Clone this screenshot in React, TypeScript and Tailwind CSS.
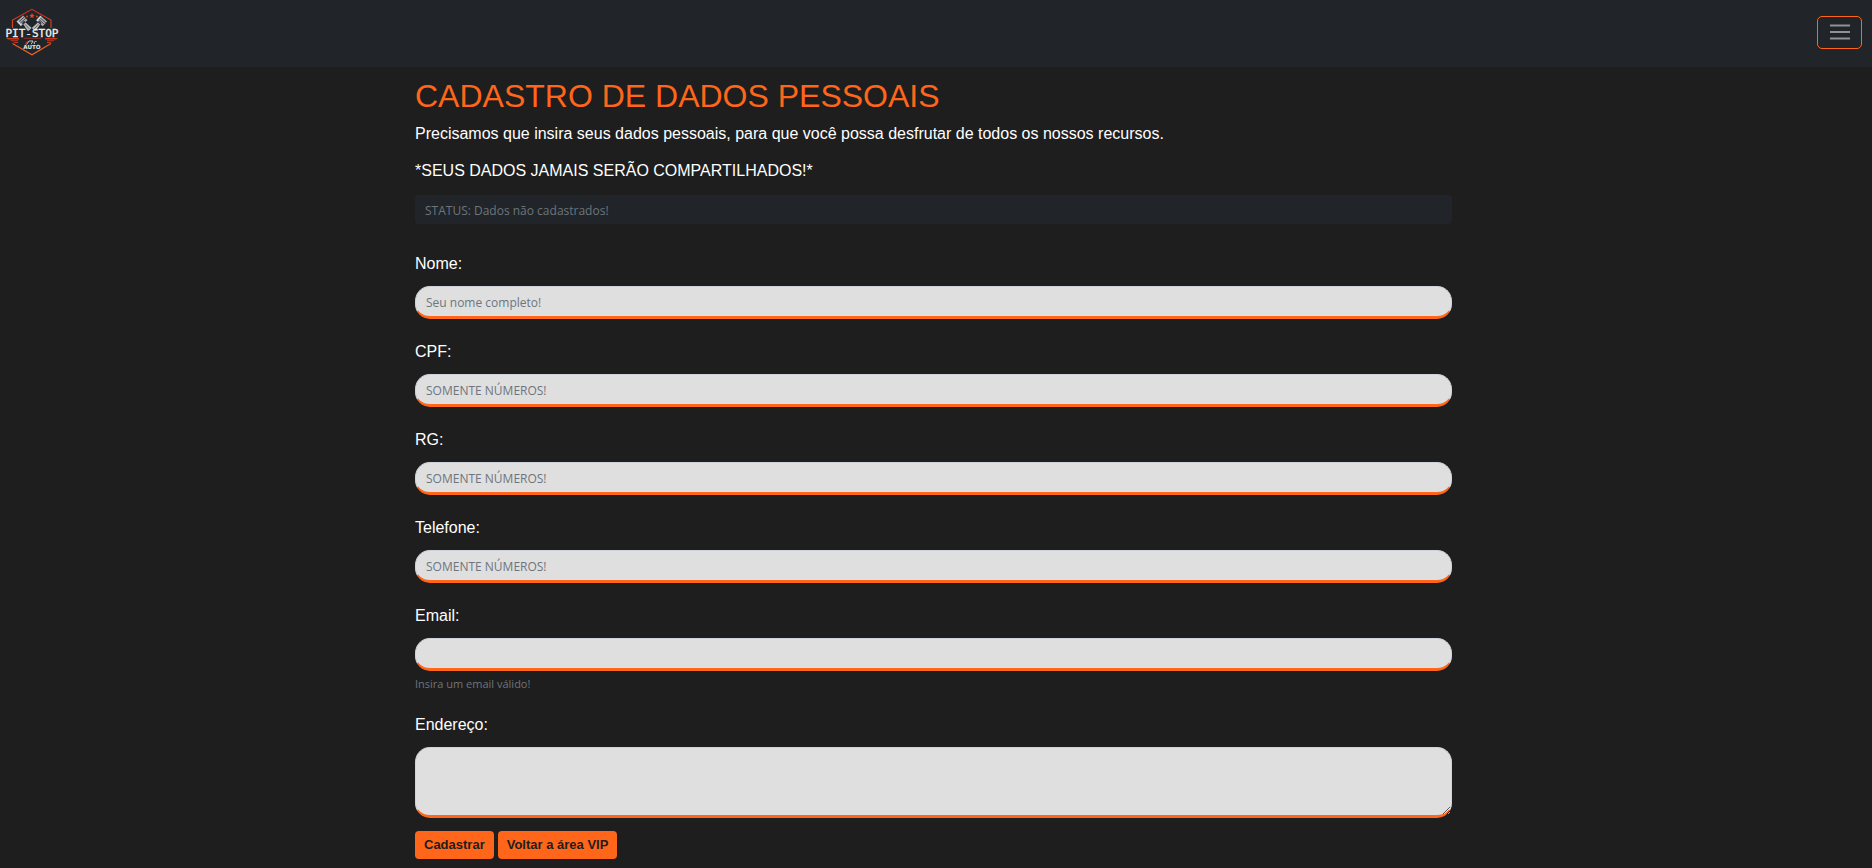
import type { InputHTMLAttributes } from "react";

const controlClass =
  "block w-full rounded-[15px] border border-b-3 border-[#ced4da] border-b-[#ff661a] bg-[#dfdfdf] px-2.5 pt-1.5 pb-1 font-['Open_Sans',sans-serif] text-xs leading-5 text-[#212529] placeholder:text-[#6c757d] placeholder:opacity-100";

type FieldProps = InputHTMLAttributes<HTMLInputElement> & {
  id: string;
  label: string;
  hint?: string;
};

function Field({ id, label, hint, ...rest }: FieldProps) {
  return (
    <div>
      <label htmlFor={id} className="mb-2.5 block">
        {label}
      </label>
      <input id={id} name={id} className={`${controlClass} h-[33px]`} {...rest} />
      {hint && (
        <p className="mt-1 font-['Open_Sans',sans-serif] text-[11px] leading-[17px] text-[#6c757d]">
          {hint}
        </p>
      )}
    </div>
  );
}

function Piston() {
  return (
    <g>
      <path d="M-4.5 -5.5h9v6.5h-9z" fill="#a9abad" />
      <path d="M-4.5 -3.6h9M-4.5 -1.6h9" stroke="#34383c" strokeWidth="0.8" />
      <path d="M-3.5 -5v5.5" stroke="#e4e4e4" strokeWidth="1.2" />
      <circle cx="0" cy="1" r="2" fill="#34383c" />
      <path d="M-1.5 1.5h3l1 8h-5z" fill="#b9bbbc" />
      <path d="M0 2.5v6" stroke="#55595c" strokeWidth="0.8" />
    </g>
  );
}

function Logo() {
  return (
    <svg viewBox="0 0 64 64" className="size-16" role="img" aria-label="Pit-Stop Auto">
      <defs>
        <linearGradient id="frame" x1="0" y1="0" x2="0" y2="1">
          <stop offset="0" stopColor="#d52b1c" />
          <stop offset="1" stopColor="#ee6a22" />
        </linearGradient>
      </defs>
      <path
        d="M12.5 28V20L32 9.3L51 20V28M12.5 43.5L32 54.8L51 43.5"
        fill="none"
        stroke="url(#frame)"
        strokeWidth="1.1"
      />
      <path d="M32 13l.8 1.7 1.8.2-1.3 1.3.3 1.9-1.6-.9-1.6.9.3-1.9-1.3-1.3 1.8-.2z" fill="#e04a20" />
      <circle cx="27" cy="16.5" r="0.9" fill="#e04a20" />
      <circle cx="37" cy="16.5" r="0.9" fill="#e04a20" />
      <g transform="translate(23.5 22.5) rotate(-42)">
        <Piston />
      </g>
      <g transform="translate(40 22.5) rotate(42)">
        <Piston />
      </g>
      <text
        x="32"
        y="36.5"
        textAnchor="middle"
        fill="#f1f1f1"
        stroke="#f1f1f1"
        strokeWidth="0.3"
        fontFamily="DejaVu Sans Mono, monospace"
        fontSize="11"
      >
        PIT-STOP
      </text>
      <path d="M6 38h13v1.5h-11zM10 40.3h8v1H12zM13 42h5v1h-3z" fill="#c8371f" />
      <path d="M58 38h-13v1.5h11zM55 40.3h-8v1h6zM52 42h-5v1h3z" fill="#c8371f" />
      <path d="M24 38.3h17" stroke="#b8321f" strokeWidth="0.7" />
      <path d="M26.5 44.5l2.5-3.5h4l-1.8 3.2M34.5 44c-1-1.5 0-3 2-2.5" fill="none" stroke="#d7d7d7" strokeWidth="0.9" />
      <path d="M25 44.5l2.5-3.5" stroke="#d8401f" strokeWidth="0.8" />
      <text
        x="32"
        y="49"
        textAnchor="middle"
        fill="#e6e6e6"
        fontFamily="DejaVu Sans, sans-serif"
        fontWeight="700"
        fontSize="5.6"
      >
        AUTO
      </text>
    </svg>
  );
}

export default function App() {
  return (
    <div className="min-h-screen bg-[#1e1e1e] font-['Liberation_Sans',Arial,sans-serif] text-base leading-6 text-white">
      <nav className="flex items-center justify-between bg-[#212529] pr-2.5 pb-[3px]">
        <a href="#" className="block">
          <Logo />
        </a>
        <button
          type="button"
          aria-label="Abrir menu"
          className="flex h-[33px] w-[45px] items-center justify-center rounded-[5px] border border-[#ff661a]"
        >
          <svg viewBox="0 0 20 18" className="h-[18px] w-5" fill="none" stroke="#909294" strokeWidth="2" aria-hidden="true">
            <path d="M0 2.5h20M0 9h20M0 15.5h20" />
          </svg>
        </button>
      </nav>

      <main className="pt-2.5 pr-[5px] pb-2">
        <div className="mx-auto max-w-[1037px]">
          <h1 className="text-[32px] leading-[38px] text-[#ff661a]">CADASTRO DE DADOS PESSOAIS</h1>
          <p className="mt-[7px]">
            Precisamos que insira seus dados pessoais, para que você possa desfrutar de todos os nossos recursos.
          </p>
          <p className="mt-[13px]">*SEUS DADOS JAMAIS SERÃO COMPARTILHADOS!*</p>
          <p className="mt-3 h-[29px] rounded bg-[#212529] px-2.5 py-1 font-['Open_Sans',sans-serif] text-xs leading-6 text-[#6c757d]">
            STATUS: Dados não cadastrados!
          </p>

          <form className="mt-7">
            <div className="flex flex-col gap-[21px]">
              <Field id="nome" label="Nome:" placeholder="Seu nome completo!" />
              <Field id="cpf" label="CPF:" placeholder="SOMENTE NÚMEROS!" />
              <Field id="rg" label="RG:" placeholder="SOMENTE NÚMEROS!" />
              <Field id="telefone" label="Telefone:" type="tel" placeholder="SOMENTE NÚMEROS!" />
              <Field id="email" label="Email:" type="email" hint="Insira um email válido!" />
              <div>
                <label htmlFor="endereco" className="mb-2.5 block">
                  Endereço:
                </label>
                <textarea id="endereco" name="endereco" className={`${controlClass} h-[71px] resize-y`} />
              </div>
            </div>
            <div className="mt-[13px] flex gap-1 text-[13px] font-bold text-[#1e1e1e]">
              <button type="submit" className="h-7 rounded bg-[#ff661a] px-[9px]">
                Cadastrar
              </button>
              <button type="button" className="h-7 rounded bg-[#ff661a] px-[9px]">
                Voltar a área VIP
              </button>
            </div>
          </form>
        </div>
      </main>
    </div>
  );
}
